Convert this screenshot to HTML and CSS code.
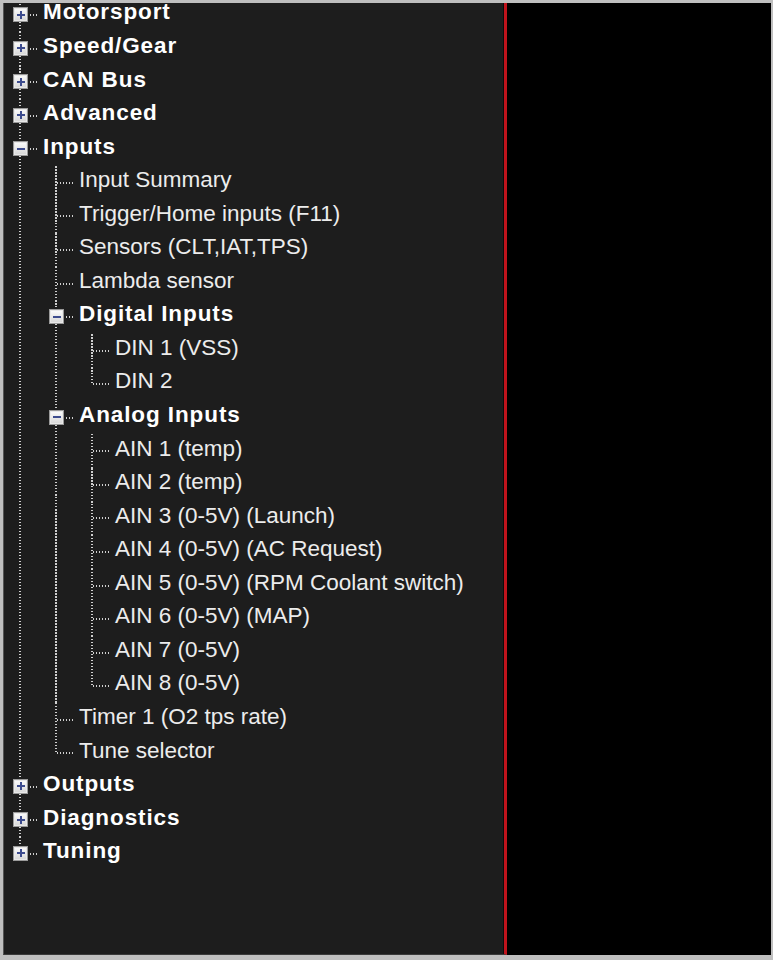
FILE: index.html
```html
<!DOCTYPE html>
<html lang="en">
<head>
    <meta charset="UTF-8">
    <meta name="viewport" content="width=device-width, initial-scale=1.0">
    <title>Settings tree</title>
    <link rel="stylesheet" href="styles.css">
</head>
<body>
    <div class="window">
        <div class="tree-pane">
            <ul class="tree root">
                <li><div class="row"><span class="joint"><i class="stub"></i><b class="box plus"></b></span><span class="label bold">Motorsport</span></div></li>
                <li><div class="row"><span class="joint"><i class="stub"></i><b class="box plus"></b></span><span class="label bold">Speed/Gear</span></div></li>
                <li><div class="row"><span class="joint"><i class="stub"></i><b class="box plus"></b></span><span class="label bold">CAN Bus</span></div></li>
                <li><div class="row"><span class="joint"><i class="stub"></i><b class="box plus"></b></span><span class="label bold">Advanced</span></div></li>
                <li>
                    <div class="row"><span class="joint"><i class="stub"></i><b class="box minus"></b></span><span class="label bold">Inputs</span></div>
                    <ul class="tree">
                        <li><div class="row"><span class="joint"><i class="stub"></i></span><span class="label">Input Summary</span></div></li>
                        <li><div class="row"><span class="joint"><i class="stub"></i></span><span class="label">Trigger/Home inputs (F11)</span></div></li>
                        <li><div class="row"><span class="joint"><i class="stub"></i></span><span class="label">Sensors (CLT,IAT,TPS)</span></div></li>
                        <li><div class="row"><span class="joint"><i class="stub"></i></span><span class="label">Lambda sensor</span></div></li>
                        <li>
                            <div class="row"><span class="joint"><i class="stub"></i><b class="box minus"></b></span><span class="label bold">Digital Inputs</span></div>
                            <ul class="tree">
                                <li><div class="row"><span class="joint"><i class="stub"></i></span><span class="label">DIN 1 (VSS)</span></div></li>
                                <li class="last"><div class="row"><span class="joint"><i class="stub"></i></span><span class="label">DIN 2</span></div></li>
                            </ul>
                        </li>
                        <li>
                            <div class="row"><span class="joint"><i class="stub"></i><b class="box minus"></b></span><span class="label bold">Analog Inputs</span></div>
                            <ul class="tree">
                                <li><div class="row"><span class="joint"><i class="stub"></i></span><span class="label">AIN 1 (temp)</span></div></li>
                                <li><div class="row"><span class="joint"><i class="stub"></i></span><span class="label">AIN 2 (temp)</span></div></li>
                                <li><div class="row"><span class="joint"><i class="stub"></i></span><span class="label">AIN 3 (0-5V) (Launch)</span></div></li>
                                <li><div class="row"><span class="joint"><i class="stub"></i></span><span class="label">AIN 4 (0-5V) (AC Request)</span></div></li>
                                <li><div class="row"><span class="joint"><i class="stub"></i></span><span class="label">AIN 5 (0-5V) (RPM Coolant switch)</span></div></li>
                                <li><div class="row"><span class="joint"><i class="stub"></i></span><span class="label">AIN 6 (0-5V) (MAP)</span></div></li>
                                <li><div class="row"><span class="joint"><i class="stub"></i></span><span class="label">AIN 7 (0-5V)</span></div></li>
                                <li class="last"><div class="row"><span class="joint"><i class="stub"></i></span><span class="label">AIN 8 (0-5V)</span></div></li>
                            </ul>
                        </li>
                        <li><div class="row"><span class="joint"><i class="stub"></i></span><span class="label">Timer 1 (O2 tps rate)</span></div></li>
                        <li class="last"><div class="row"><span class="joint"><i class="stub"></i></span><span class="label">Tune selector</span></div></li>
                    </ul>
                </li>
                <li><div class="row"><span class="joint"><i class="stub"></i><b class="box plus"></b></span><span class="label bold">Outputs</span></div></li>
                <li><div class="row"><span class="joint"><i class="stub"></i><b class="box plus"></b></span><span class="label bold">Diagnostics</span></div></li>
                <li class="last"><div class="row"><span class="joint"><i class="stub"></i><b class="box plus"></b></span><span class="label bold">Tuning</span></div></li>
            </ul>
        </div>
        <div class="view"></div>
    </div>
</body>
</html>
```

FILE: styles.css
```css
html, body {
    margin: 0;
    padding: 0;
    background: #c4c4c4;
}

.window {
    display: flex;
    width: 773px;
    height: 960px;
    box-sizing: border-box;
    border: 3px solid #bfbfbf;
    border-right-width: 2px;
    border-bottom-width: 5px;
    background: #000;
}

.tree-pane {
    width: 500px;
    background: #1d1d1d;
    border-left: 1px solid #555;
    border-bottom: 1px solid #3a3a3a;
    border-right: 3px solid #c0131c;
    box-shadow: inset -1px 0 0 #0c0c0c;
    overflow: hidden;
    font-family: "Liberation Sans", Arial, sans-serif;
    font-size: 22.5px;
    color: #ececec;
}

.view {
    flex: 1;
    background: #000;
}

.tree {
    list-style: none;
    margin: 0;
    padding: 0 0 0 36px;
}

.tree.root {
    padding-left: 0;
    margin-top: -4.8px;
}

.tree li {
    position: relative;
}

/* vertical dotted connector */
.tree li::before {
    content: "";
    position: absolute;
    left: 15px;
    top: 0;
    bottom: 0;
    width: 2px;
    background: repeating-linear-gradient(to bottom, #cfcfcf 0 1.5px, transparent 1.5px 3px);
}

.tree li.last::before {
    bottom: auto;
    height: 16.8px;
}

.row {
    display: flex;
    align-items: center;
    height: 33.56px;
    white-space: nowrap;
}

.joint {
    position: relative;
    flex: 0 0 34px;
    height: 100%;
}

.stub {
    position: absolute;
    left: 17px;
    right: 0;
    top: 16px;
    height: 2px;
    background: repeating-linear-gradient(to right, #cfcfcf 0 1.5px, transparent 1.5px 3px);
}

.box {
    position: absolute;
    left: 9px;
    top: 9px;
    width: 15px;
    height: 15px;
    box-sizing: border-box;
    border: 1px solid #9a9a9a;
    background: linear-gradient(#fdfdfd, #d6d6d6);
    box-shadow: inset 0 0 0 1px #e8e8e8;
}

.box::before,
.box::after {
    content: "";
    position: absolute;
    background: #3d4c8e;
}

.box::before {
    left: 2.5px;
    top: 5.5px;
    width: 8px;
    height: 2px;
}

.plus::after {
    left: 5.5px;
    top: 2.5px;
    width: 2px;
    height: 8px;
}

.minus::after {
    display: none;
}

.label {
    margin-left: 5px;
    margin-bottom: 5px;
}

.label.bold {
    font-weight: bold;
    color: #fff;
    letter-spacing: 0.9px;
}
```
